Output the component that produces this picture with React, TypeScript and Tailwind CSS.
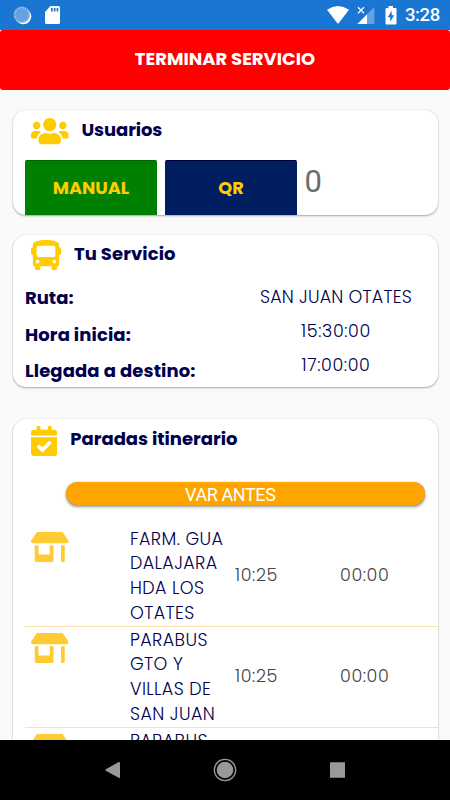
import React from "react";
import { FaUsers, FaBus, FaCalendarCheck, FaStoreAlt } from "react-icons/fa";

const bold = "font-['Poppins','Inter',sans-serif] font-bold whitespace-nowrap";
const light = "font-['Poppins','Lato',sans-serif] font-light whitespace-nowrap";

function StatusBar() {
  return (
    <div className="flex h-[30px] shrink-0 items-center bg-[#1976d2] text-white">
      <svg className="ml-[13px] h-[19px] w-[19px]" viewBox="0 0 19 19">
        <circle cx="10.3" cy="10.3" r="8" fill="#fff" />
        <circle cx="8.9" cy="8.8" r="8" fill="#64a2e0" />
        <circle cx="8.9" cy="8.8" r="7.4" fill="none" stroke="#a9cbee" strokeWidth="1.6" strokeDasharray="1 1.1" />
      </svg>
      <svg className="ml-[13px] h-[18px] w-[15px]" viewBox="0 0 15 18">
        <path d="M5.5 0H13.500Q15 0 15 1.500V16.500Q15 18 13.500 18H1.500Q0 18 0 16.500V6Z" fill="#fff" />
        <path d="M6 2h1.700v3.500H6zM8.800 2h1.700v3.500H8.800zM11.600 2h1.700v3.500h-1.700z" fill="#1976d2" />
      </svg>
      <svg className="ml-auto h-[18px] w-[22px]" viewBox="0 0 22 18">
        <path d="M0 3.700Q11-3.700 22 3.700L11.800 17Q11 18 10.200 17Z" fill="#fff" />
      </svg>
      <svg className="ml-2 h-[18px] w-[18px]" viewBox="0 0 18 18">
        <path d="M17.300 1v17H10V8.300Z" fill="#64a2e0" />
        <path d="M10 8.300V18H.3Z" fill="#fff" />
        <path d="M1 1.300l6 6M7 1.300l-6 6" stroke="#fff" strokeWidth="1.300" />
      </svg>
      <svg className="ml-[10px] h-[19px] w-3" viewBox="0 0 12 19">
        <path d="M3.500 0h4.500v2H10.500Q11.500 2 11.500 3v14.500q0 1-1 1h-9q-1 0-1-1V3q0-1 1-1h2z" fill="#fff" />
        <path d="M6.700 4.700L2.700 11.300h2.500v4.500L9.200 9.300H6.700Z" fill="#1976d2" />
      </svg>
      <span className="mr-[9px] ml-[8px] w-[36px] font-[Roboto,sans-serif] text-[18.500px] leading-[31px] font-medium tracking-[-0.400px]">3:28</span>
    </div>
  );
}

function Card({ className, children }: { className: string; children: React.ReactNode }) {
  return (
    <section className={`mr-[12.500px] ml-[12.500px] shrink-0 rounded-[13px] bg-white shadow-[0_1px_2px_rgba(0,0,0,0.32),0_0_1px_rgba(0,0,0,0.2)] ${className}`}>
      {children}
    </section>
  );
}

function Stop({ lines }: { lines: string[] }) {
  return (
    <div className="flex h-[101px] border-b border-[#ffdfa8] text-[#00004d]">
      <FaStoreAlt className="mt-[5.700px] ml-[6px] h-[30px] w-[37.500px] shrink-0 text-[#ffcb32]" />
      <div className={`mt-[0.700px] ml-[61.500px] w-[105px] shrink-0 text-[17.500px] leading-[24.700px] tracking-[0.400px] ${light}`}>
        {lines.map((line) => (
          <div key={line}>{line}</div>
        ))}
      </div>
      <div className={`flex h-[98px] items-center text-[17.500px] tracking-[0.600px] text-[#444] ${light}`}>
        <span className="w-[105px]">10:25</span>
        <span>00:00</span>
      </div>
    </div>
  );
}

const details = [
  { label: "Ruta:", value: "SAN JUAN OTATES", labelTracking: "", tracking: "tracking-[0.200px]" },
  { label: "Hora inicia:", value: "15:30:00", labelTracking: "tracking-[0.100px]", tracking: "tracking-[0.600px]" },
  { label: "Llegada a destino:", value: "17:00:00", labelTracking: "tracking-[0.120px]", tracking: "tracking-[0.600px]" },
];

export default function App() {
  return (
    <div className="flex h-[800px] w-[450px] flex-col overflow-hidden bg-[#fafafa]">
      <StatusBar />
      <main className="flex min-h-0 flex-1 flex-col overflow-hidden">
        <button className={`h-[60px] shrink-0 rounded-[3px] bg-[#f00] pb-[3px] text-[18px] text-white ${bold}`}>
          TERMINAR SERVICIO
        </button>
        <Card className="mt-5 h-[105px] overflow-hidden">
          <div className="flex h-[50px]">
            <FaUsers className="mt-[6px] ml-[18.500px] h-[30px] w-[37.500px] text-[#fc0]" />
            <h2 className={`mt-[7px] ml-[13px] text-[18px] leading-[26px] tracking-[-0.100px] text-[#00004d] ${bold}`}>Usuarios</h2>
          </div>
          <div className="ml-[12.500px] flex h-[55px]">
            <button className={`w-[132px] rounded-t-[2px] border-t border-[#006500] bg-[#008000] pt-[1px] text-[17.700px] text-[#fc0] ${bold}`}>MANUAL</button>
            <button className={`ml-2 w-[132px] rounded-t-[2px] border-t border-[#00003a] bg-[#001e60] pt-[1px] text-[17.700px] text-[#fc0] ${bold}`}>QR</button>
            <span className="ml-[7.500px] font-[Roboto,sans-serif] text-[31px] leading-[44px] text-[#6d6d6d]">0</span>
          </div>
        </Card>
        <Card className="mt-5 h-[152px] text-[#00004d]">
          <div className="flex h-[50px]">
            <FaBus className="mt-[5px] ml-[18.500px] h-[30px] w-[30px] text-[#fc0]" />
            <h2 className={`mt-[6px] ml-[13px] text-[18px] leading-[26px] tracking-[0.080px] ${bold}`}>Tu Servicio</h2>
          </div>
          <div className="flex pl-[12.500px]">
            <div className={`-mt-[5px] w-[216px] text-[18px] leading-[36.600px] ${bold}`}>
              {details.map((d) => <div key={d.label} className={d.labelTracking}>{d.label}</div>)}
            </div>
            <div className={`-mt-[5px] w-[190px] text-center text-[17.500px] leading-[34px] ${light}`}>
              {details.map((d) => <div key={d.label} className={d.tracking}>{d.value}</div>)}
            </div>
          </div>
        </Card>
        <Card className="mt-8 h-[350px]">
          <div className="flex h-[62.500px]">
            <FaCalendarCheck className="mt-[6.500px] ml-[18.500px] h-[30px] w-[26.250px] text-[#fc0]" />
            <h2 className={`mt-[7px] ml-[13px] text-[18px] leading-[26px] text-[#00004d] ${bold}`}>Paradas itinerario</h2>
          </div>
          <button className="ml-[53px] flex h-[23.500px] w-[359.500px] justify-start rounded-full bg-[#ffa500] pl-[119.500px] font-[Roboto,sans-serif] text-[18px] leading-[25px] tracking-[-0.400px] whitespace-nowrap text-white shadow-[0_2px_3px_rgba(0,0,0,0.400),0_0_1px_rgba(0,0,0,0.300)]">
            VAR ANTES
          </button>
          <div className="mt-[21px] ml-[12.500px]">
            <Stop lines={["FARM. GUA", "DALAJARA", "HDA LOS", "OTATES"]} />
            <Stop lines={["PARABUS", "GTO Y", "VILLAS DE", "SAN JUAN"]} />
            <Stop lines={["PARABUS"]} />
          </div>
        </Card>
      </main>
      <nav className="flex h-[60px] shrink-0 items-center justify-between bg-black px-[101px] text-[#999]">
        <svg className="h-6 w-6" viewBox="0 0 24 24"><path d="M4.800 11.200L17.700 4Q19 3.500 19 5V19Q19 20.500 17.700 19.700L4.800 12.800Q4 12 4.800 11.200Z" fill="currentColor" /></svg>
        <svg className="h-6 w-6" viewBox="0 0 24 24"><circle cx="12" cy="12" r="10.700" fill="none" stroke="currentColor" strokeWidth="1.300" /><circle cx="12" cy="12" r="8.300" fill="currentColor" /></svg>
        <svg className="h-6 w-6" viewBox="0 0 24 24"><rect x="5" y="4.300" width="15" height="15.500" rx=".3" fill="currentColor" /></svg>
      </nav>
    </div>
  );
}
